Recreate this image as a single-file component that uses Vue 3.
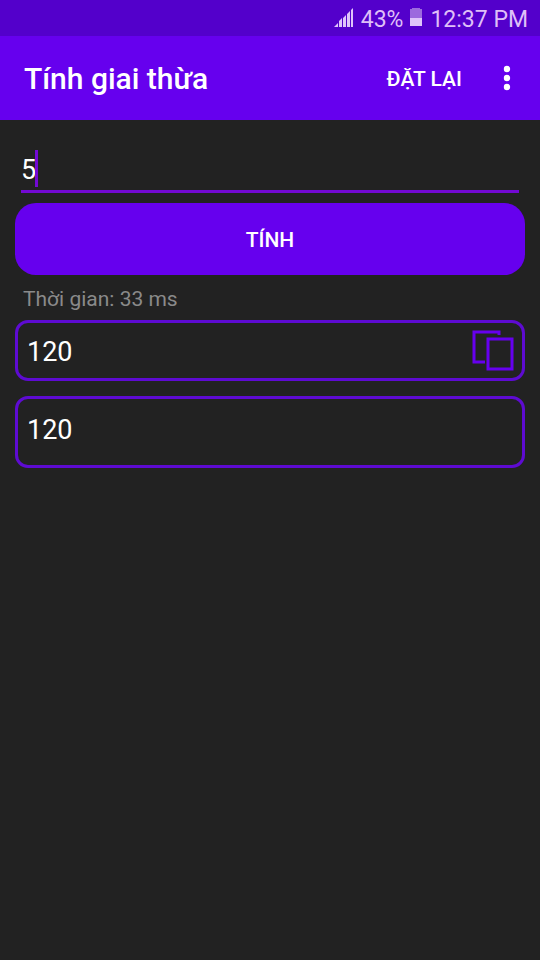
<template>
  <div class="page">
    <div class="status-bar">
      <svg class="signal" viewBox="0 0 20 20" width="20" height="20">
        <path d="M0 19l4-4v4zM5 19v-6l3-3v9zM9 19v-9l3-3v12zM13 19V6l3-3v16zM17 19V2l2-2v19z" />
      </svg>
      <span>43%</span>
      <svg class="battery" viewBox="0 0 13 20" width="13" height="20">
        <path class="empty" d="M2 0h8v1h2v10H0V1h2z" />
        <path d="M0 10h12v8H0z" />
      </svg>
      <span>12:37 PM</span>
    </div>

    <header class="toolbar">
      <h1>Tính giai thừa</h1>
      <button class="reset" @click="reset">ĐẶT LẠI</button>
      <button class="more" aria-label="Tùy chọn khác">
        <svg viewBox="0 0 8 26" width="8" height="26">
          <circle cx="4" cy="4" r="3.2" />
          <circle cx="4" cy="13" r="3.2" />
          <circle cx="4" cy="22" r="3.2" />
        </svg>
      </button>
    </header>

    <main class="content">
      <div class="field">
        <input v-model="number" type="text" inputmode="numeric" aria-label="Nhập số" @keyup.enter="calculate" />
        <span class="caret" :style="{ left: number.length + 'ch' }"></span>
      </div>

      <button class="calculate" @click="calculate">TÍNH</button>

      <p class="time">Thời gian: {{ time }} ms</p>

      <div class="result">
        <span>{{ result }}</span>
        <button class="copy" aria-label="Sao chép" @click="copy">
          <svg viewBox="0 0 42 42" width="42" height="42">
            <path d="M27 5V2H2v30h11" />
            <path d="M16 9h24v30H16z" />
          </svg>
        </button>
      </div>

      <div class="result detail">{{ result }}</div>
    </main>
  </div>
</template>

<script setup>
import { ref } from 'vue'

const number = ref('5')
const result = ref('120')
const time = ref(33)

const calculate = () => {
  if (!/^\d+$/.test(number.value)) return
  const start = performance.now()
  const n = BigInt(number.value)
  let value = 1n
  for (let i = 2n; i <= n; i++) {
    value *= i
  }
  result.value = value.toString()
  time.value = Math.round(performance.now() - start)
}

const reset = () => {
  number.value = ''
  result.value = ''
  time.value = 0
}

const copy = () => {
  navigator.clipboard?.writeText(result.value)
}
</script>

<style>
body {
  margin: 0;
  background-color: #222222;
}
</style>

<style scoped>
.page {
  min-height: 100vh;
  background-color: #222222;
  color: white;
  font-family: Roboto, "Noto Sans", sans-serif;
}

button {
  padding: 0;
  border: none;
  background: none;
  color: white;
  font-family: inherit;
  font-weight: 500;
  cursor: pointer;
}

svg {
  display: block;
}

.status-bar {
  display: flex;
  justify-content: flex-end;
  align-items: center;
  gap: 7px;
  height: 36px;
  padding: 0 12px;
  box-sizing: border-box;
  background-color: #5300cb;
  color: #dfbff8;
  font-size: 23px;
  line-height: 32px;
}

.status-bar span {
  padding-top: 4px;
}

.status-bar svg {
  fill: #dfc4fa;
}

.status-bar .empty {
  fill: #9c6ade;
}

.toolbar {
  display: flex;
  align-items: center;
  height: 84px;
  padding: 0 24px;
  background-color: #6600ee;
}

.toolbar h1 {
  flex: 1;
  margin: 0;
  font-size: 30px;
  font-weight: 500;
}

.reset {
  padding-top: 2px;
  font-size: 21px;
}

.more {
  padding: 8px 5px 8px 41px;
}

.more svg {
  fill: white;
}

.content {
  display: flex;
  flex-direction: column;
  padding: 30px 15px;
}

.field {
  position: relative;
  margin: 0 6px 10px;
  border-bottom: 3px solid #7309d3;
  font-size: 27px;
}

.field input {
  display: block;
  width: 100%;
  height: 40px;
  padding: 0;
  border: none;
  outline: none;
  box-sizing: border-box;
  background: none;
  color: white;
  caret-color: transparent;
  font: inherit;
}

.caret {
  position: absolute;
  top: 0;
  width: 3px;
  height: 37px;
  margin-left: -1px;
  background-color: #7309d3;
}

.calculate {
  height: 72px;
  padding-top: 2px;
  border-radius: 21px;
  background-color: #6600ee;
  font-size: 21px;
}

.time {
  margin: 10px 8px 7px;
  color: #8a8a8a;
  font-size: 21px;
  line-height: 28px;
}

.result {
  display: flex;
  justify-content: space-between;
  align-items: center;
  min-height: 61px;
  padding: 0 8px 0 9px;
  border: 3px solid #5e0bd2;
  border-radius: 13px;
  box-sizing: border-box;
  font-size: 27px;
  line-height: 38px;
  overflow-wrap: anywhere;
}

.result span {
  padding-top: 2px;
}

.detail {
  align-items: flex-start;
  min-height: 72px;
  margin-top: 15px;
  padding: 12px 9px;
}

.copy svg {
  fill: none;
  stroke: #6600ee;
  stroke-width: 3;
}
</style>
